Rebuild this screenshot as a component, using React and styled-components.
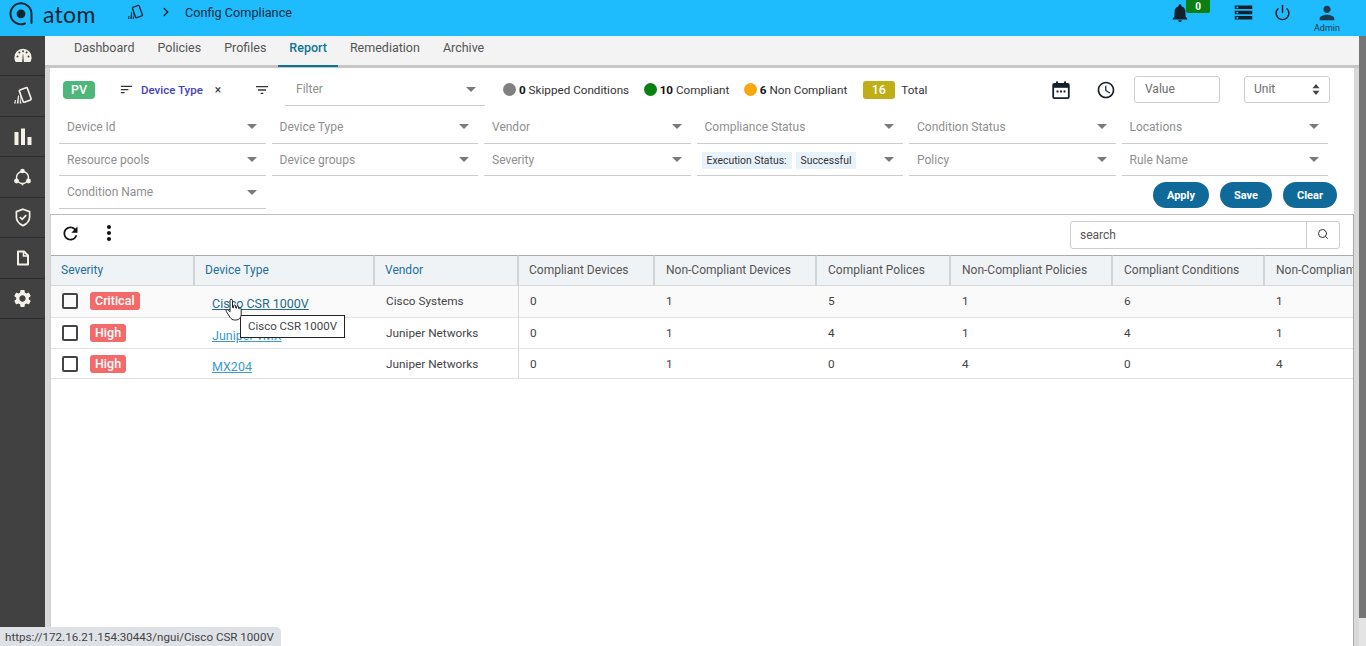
import styled, { createGlobalStyle } from "styled-components";
import { FiChevronRight, FiPower, FiSearch } from "react-icons/fi";
import {
  MdNotifications,
  MdStorage,
  MdPerson,
  MdSort,
  MdFilterList,
  MdAccessTime,
  MdSettings,
  MdRefresh,
  MdMoreVert,
} from "react-icons/md";

const GlobalStyle = createGlobalStyle`
  html, body {
    margin: 0;
    padding: 0;
    height: 100%;
    overflow: hidden;
    background: #fff;
    font-family: Roboto, "Liberation Sans", sans-serif;
  }
`;

const Page = styled.div`
  position: relative;
  width: 1366px;
  height: 646px;
  display: flex;
  flex-direction: column;
  overflow: hidden;
`;

const TopBar = styled.header`
  height: 36px;
  flex-shrink: 0;
  background: #1ebbfd;
  display: flex;
  align-items: center;
  color: #12263a;
`;

const Brand = styled.div`
  display: flex;
  align-items: center;
  gap: 9px;
  padding-left: 8px;
  width: 127px;
  box-sizing: border-box;
  margin-top: -9px;
`;

const BrandName = styled.span`
  font-family: Lato, "Noto Sans", sans-serif;
  font-size: 23px;
  letter-spacing: 0.3px;
  line-height: 26px;
  color: #142532;
`;

const Crumb = styled.div`
  display: flex;
  align-items: center;
  font-size: 12.7px;
  color: #1b2d3d;
  margin-top: -12px;
  svg:nth-child(2) {
    margin: 0 12px 0 15px;
  }
`;

const TopIcons = styled.div`
  margin-left: auto;
  align-self: stretch;
  display: flex;
  align-items: flex-start;
  padding-right: 26px;
`;

const BellWrap = styled.div`
  position: relative;
  width: 22px;
  height: 36px;
  display: flex;
  justify-content: center;
  padding-top: 1px;
  box-sizing: border-box;
  margin-right: 42px;
  font-size: 24px;
  color: #12202c;
`;

const BellBadge = styled.span`
  position: absolute;
  left: 17px;
  top: 0;
  width: 24px;
  height: 13px;
  background: #0a8012;
  color: #fff;
  font-size: 10px;
  font-weight: 700;
  text-align: center;
  line-height: 13px;
  border-radius: 0 0 2px 2px;
`;

const TopIcon = styled.span`
  display: flex;
  font-size: ${(p) => p.$size}px;
  color: #12202c;
  margin-top: ${(p) => p.$top}px;
  margin-right: ${(p) => p.$gap}px;
`;

const UserBlock = styled.div`
  display: flex;
  flex-direction: column;
  align-items: center;
  font-size: 9px;
  line-height: 8px;
  color: #1c3a50;
  padding-top: 2px;
`;

const Body = styled.div`
  flex: 1;
  display: flex;
  min-height: 0;
`;

const SideNav = styled.nav`
  width: 45px;
  flex-shrink: 0;
  background: #414141;
  display: flex;
  flex-direction: column;
`;

const SideItem = styled.div`
  height: 39.45px;
  display: flex;
  align-items: center;
  justify-content: center;
  color: #f4f1e8;
  border-bottom: 1px solid #2e2e2e;
  font-size: 21px;
`;

const Main = styled.main`
  flex: 1;
  min-width: 0;
  display: flex;
  flex-direction: column;
  background: #d9d9d9;
  position: relative;
`;

const TabBar = styled.div`
  height: 29px;
  flex-shrink: 0;
  background: #f3f3f3;
  border-bottom: 3px solid #c6c6c6;
  margin-right: 7px;
  display: flex;
  padding-left: 29px;
  gap: 23px;
`;

const Tab = styled.div`
  font-size: 12.5px;
  line-height: 23px;
  color: ${(p) => (p.$active ? "#0e7396" : "#555")};
  font-weight: ${(p) => (p.$active ? 500 : 400)};
  position: relative;
  ${(p) =>
    p.$active &&
    `
    &::after {
      content: "";
      position: absolute;
      left: -11px;
      right: -11px;
      bottom: -2px;
      height: 2px;
      background: #0e7396;
    }
  `}
`;

const ScrollThumb = styled.div`
  position: absolute;
  top: 0;
  right: 0;
  bottom: 0;
  width: 7px;
  background: #e4e4e4;
  &::before {
    content: "";
    display: block;
    height: 582px;
    background: #757575;
  }
`;

const FilterPanel = styled.section`
  margin: 0 12px 0 5px;
  height: 147px;
  flex-shrink: 0;
  background: #fff;
  border-bottom: 1px solid #bdbdbd;
  box-sizing: border-box;
  padding: 1px 0 0 13px;
`;

const SummaryRow = styled.div`
  height: 41px;
  display: flex;
  align-items: center;
  font-size: 11.7px;
  color: #333;
`;

const PvTag = styled.span`
  width: 32px;
  height: 18px;
  background: #4cb778;
  border-radius: 4px;
  color: #fff;
  font-size: 12.5px;
  font-weight: 500;
  text-align: center;
  line-height: 18px;
  margin-right: 24px;
`;

const GroupChip = styled.span`
  display: flex;
  align-items: center;
  color: #4541b8;
  font-size: 11.5px;
  font-weight: 500;
  width: 105px;
  gap: 7px;
`;

const ChipClose = styled.span`
  margin-left: 5px;
  color: #333;
  font-weight: 400;
  font-size: 12px;
`;

const FilterIcon = styled.span`
  display: flex;
  font-size: 16px;
  color: #333;
  width: 34px;
  margin-left: 30px;
  box-sizing: border-box;
`;

const FilterSelect = styled.div`
  width: 200px;
  height: 32px;
  border-bottom: 1px solid #ccc;
  display: flex;
  align-items: center;
  justify-content: space-between;
  box-sizing: border-box;
  padding: 0 9px 0 11px;
  margin-left: -3px;
  color: #8f8f8f;
  font-size: 12px;
`;

const Caret = styled.i`
  width: 0;
  height: 0;
  border-left: 5px solid transparent;
  border-right: 5px solid transparent;
  border-top: 5px solid #7a7a7a;
`;

const Stat = styled.span`
  display: flex;
  align-items: center;
  gap: 3px;
  color: #333;
  margin-left: ${(p) => p.$left || 14.5}px;
  b {
    color: #111;
    font-weight: 700;
  }
`;

const Dot = styled.i`
  width: 13px;
  height: 13px;
  border-radius: 50%;
  background: ${(p) => p.$color};
`;

const TotalTag = styled.span`
  width: 32px;
  height: 18px;
  background: #bfae16;
  border-radius: 3px;
  color: #fff;
  font-size: 12.5px;
  font-weight: 500;
  text-align: center;
  line-height: 18px;
  margin: 0 6.5px 0 15.5px;
`;

const SummaryRight = styled.div`
  margin-left: auto;
  display: flex;
  align-items: center;
  padding-right: 24px;
`;

const RightIcon = styled.span`
  display: flex;
  font-size: 20px;
  color: #16202a;
  margin-right: ${(p) => p.$gap}px;
`;

const ValueBox = styled.div`
  width: 86px;
  height: 27px;
  border: 1px solid #ccc;
  border-radius: 3px;
  box-sizing: border-box;
  font-size: 12px;
  color: #6d6d6d;
  line-height: 25px;
  padding-left: 10px;
  margin-right: 24px;
`;

const UnitBox = styled(ValueBox)`
  margin-right: 0;
  display: flex;
  align-items: center;
  justify-content: space-between;
  padding: 0 9px;
`;

const UpDown = styled.svg`
  width: 8px;
  height: 11px;
`;

const FieldGrid = styled.div`
  display: flex;
  flex-wrap: wrap;
  width: 1290px;
  column-gap: 6px;
  margin: 1px 0 0 -4px;
`;

const Field = styled.div`
  width: 206.5px;
  height: 32.7px;
  box-sizing: border-box;
  border-bottom: 1px solid #ccc;
  display: flex;
  align-items: center;
  justify-content: space-between;
  padding: 0 9px 0 8px;
  color: #8f8f8f;
  font-size: 12px;
`;

const TagGroup = styled.span`
  display: flex;
  gap: 4px;
  margin: 1px 0 0 -3px;
`;

const Tag = styled.span`
  background: #e8f2fb;
  color: #333;
  font-size: 10.4px;
  padding: 0 5px;
  line-height: 17px;
`;

const LastRow = styled.div`
  display: flex;
  justify-content: space-between;
  padding-right: 17px;
  margin-left: -4px;
`;

const ButtonRow = styled.div`
  display: flex;
  gap: 11px;
  margin-top: 6px;
  height: 26px;
`;

const ActionButton = styled.button`
  width: ${(p) => p.$w}px;
  height: 26px;
  border: 0;
  border-radius: 13px;
  background: #0f6a9a;
  color: #fff;
  font-family: inherit;
  font-size: 11px;
  font-weight: 700;
  padding: 0;
`;

const TableArea = styled.section`
  flex: 1;
  min-height: 0;
  margin: 0 12px 0 5px;
  background: #fff;
  border-left: 1px solid #cfcfcf;
  border-right: 1px solid #aaa;
  display: flex;
  flex-direction: column;
  overflow: hidden;
`;

const Toolbar = styled.div`
  height: 40px;
  flex-shrink: 0;
  display: flex;
  align-items: center;
  padding: 0 13px 0 9px;
  color: #111;
`;

const ToolIcon = styled.span`
  display: flex;
  font-size: ${(p) => p.$size}px;
  margin: -4px ${(p) => p.$gap}px 0 0;
`;

const SearchBox = styled.div`
  margin-left: auto;
  width: 270px;
  height: 28px;
  border: 1px solid #ccc;
  border-radius: 3px;
  box-sizing: border-box;
  display: flex;
  font-size: 12px;
  color: #555;
`;

const SearchText = styled.span`
  flex: 1;
  padding-left: 9px;
  line-height: 26px;
`;

const SearchBtn = styled.span`
  width: 33px;
  border-left: 1px solid #ccc;
  display: flex;
  align-items: center;
  justify-content: center;
  font-size: 12px;
  color: #333;
  padding-bottom: 3px;
  box-sizing: border-box;
`;

const Grid = styled.div`
  display: grid;
  grid-template-columns: 144px 180px 144px 136px 162px 134px 162px 152px 110px;
  flex-shrink: 0;
`;

const HeadCell = styled.div`
  height: 31px;
  box-sizing: border-box;
  background: #f0f3f6;
  border-top: 1px solid #a8acb0;
  border-bottom: 1px solid #d5d8da;
  border-right: 2px solid #cfd4d8;
  font-size: 12px;
  line-height: 28px;
  padding-left: ${(p) => p.$pad}px;
  color: ${(p) => (p.$link ? "#22709c" : "#555")};
  white-space: nowrap;
  overflow: hidden;
`;

const Cell = styled.div`
  height: ${(p) => p.$h}px;
  box-sizing: border-box;
  background: ${(p) => (p.$hover ? "#fafafa" : "#fff")};
  border-bottom: 1px solid #e2e2e2;
  border-right: ${(p) => (p.$divide ? "1px solid #dadada" : "0")};
  font-size: 11.8px;
  color: #444;
  display: flex;
  align-items: center;
  padding-left: ${(p) => p.$pad || 11}px;
  padding-bottom: ${(p) => (p.$hover ? 2 : 0)}px;
  white-space: nowrap;
`;

const Check = styled.i`
  width: 12px;
  height: 12px;
  border: 2px solid #444;
  border-radius: 2px;
  margin: 0 12px 0 0;
`;

const Severity = styled.span`
  background: #f26a6a;
  color: #fff;
  font-size: 12.5px;
  font-weight: 500;
  border-radius: 3px;
  padding: 0 5px;
  line-height: 18px;
`;

const DeviceLink = styled.a`
  color: ${(p) => (p.$hover ? "#1f6a8c" : "#3c9bcb")};
  text-decoration: underline;
  font-size: 12.5px;
  margin-top: 5px;
`;

const Tooltip = styled.div`
  position: absolute;
  left: 240px;
  top: 315px;
  height: 23px;
  width: 105px;
  box-sizing: border-box;
  background: #fff;
  border: 1px solid #222;
  font-size: 11.5px;
  color: #444;
  line-height: 21px;
  text-align: center;
  z-index: 3;
`;

const Cursor = styled.svg`
  position: absolute;
  left: 225px;
  top: 298px;
  width: 18px;
  height: 24px;
  z-index: 4;
`;

const StatusBar = styled.div`
  position: absolute;
  left: 0;
  bottom: 0;
  height: 19px;
  width: 281px;
  background: #dee1e6;
  border-top-right-radius: 5px;
  font-size: 11.6px;
  color: #444;
  line-height: 20px;
  padding-left: 5px;
  box-sizing: border-box;
  white-space: nowrap;
  z-index: 5;
`;

const tabs = ["Dashboard", "Policies", "Profiles", "Report", "Remediation", "Archive"];

const fields = [
  "Device Id",
  "Device Type",
  "Vendor",
  "Compliance Status",
  "Condition Status",
  "Locations",
  "Resource pools",
  "Device groups",
  "Severity",
  "Execution",
  "Policy",
  "Rule Name",
];

const columns = [
  ["Severity", true, 10],
  ["Device Type", true, 10],
  ["Vendor", true, 10],
  ["Compliant Devices", false, 10],
  ["Non-Compliant Devices", false, 11],
  ["Compliant Polices", false, 11],
  ["Non-Compliant Policies", false, 11],
  ["Compliant Conditions", false, 11],
  ["Non-Compliant Conditions", false, 11],
];

const rows = [
  { sev: "Critical", device: "Cisco CSR 1000V", vendor: "Cisco Systems", nums: [0, 1, 5, 1, 6, 1], h: 32, hover: true },
  { sev: "High", device: "Juniper vMX", vendor: "Juniper Networks", nums: [0, 1, 4, 1, 4, 1], h: 31 },
  { sev: "High", device: "MX204", vendor: "Juniper Networks", nums: [0, 1, 0, 4, 0, 4], h: 30 },
];

function DevicesIcon({ size = 20 }) {
  return (
    <svg width={size} height={size} viewBox="0 0 20 20" fill="none" stroke="currentColor">
      <rect x="8" y="2.5" width="8.5" height="13" rx="1" strokeWidth="1.6" transform="rotate(-20 12 9)" />
      <path d="M1 17.500h1.600l.3-3.500H2ZM3.800 17.500h1.700l.6-8H5ZM6.800 17.500h1.700L7.500 13.500 7.800 6H7.200Z" fill="currentColor" stroke="none" />
    </svg>
  );
}

function AtomLogo() {
  return (
    <svg width="26" height="26" viewBox="0 0 26 26" fill="none">
      <path d="M17 22.500A10.500 10.500 0 1 1 23.500 12.800V22" stroke="#142532" strokeWidth="2" strokeLinecap="round" />
      <circle cx="13" cy="12.800" r="4.400" fill="#142532" />
    </svg>
  );
}

function GaugeIcon() {
  return (
    <svg width="18" height="15" viewBox="0 0 18 15" fill="currentColor">
      <path d="M9 .8a8.600 8.600 0 0 0-8.600 8.600c0 1.700.5 3.200 1.300 4.600h14.600c.8-1.400 1.300-2.900 1.300-4.600A8.600 8.600 0 0 0 9 .8Z" />
      <g fill="#414141">
        <circle cx="3.500" cy="8.600" r="1" />
        <circle cx="5.400" cy="4.600" r="1" />
        <circle cx="9" cy="3.200" r="1" />
        <circle cx="12.600" cy="4.600" r="1" />
        <circle cx="14.500" cy="8.600" r="1" />
        <path d="M8.200 14 8.800 6h.4l.6 8Z" />
      </g>
    </svg>
  );
}

function BarsIcon() {
  return (
    <svg width="18" height="17" viewBox="0 0 18 17" fill="currentColor">
      <rect x="0.500" y="4" width="4" height="13" />
      <rect x="7" y="0.500" width="4" height="16.500" />
      <rect x="13.500" y="9" width="4" height="8" />
    </svg>
  );
}

function ClusterIcon() {
  return (
    <svg width="17" height="18" viewBox="0 0 17 18" fill="none" stroke="currentColor" strokeWidth="1.4">
      <circle cx="8.500" cy="9.500" r="6" />
      <g fill="currentColor" stroke="none">
        <circle cx="8.500" cy="3" r="2.300" />
        <circle cx="2.500" cy="13" r="2.400" />
        <circle cx="14.500" cy="13" r="2.400" />
        <circle cx="8.500" cy="16.500" r="1" />
      </g>
    </svg>
  );
}

function ShieldIcon() {
  return (
    <svg width="16" height="19" viewBox="0 0 16 19" fill="none" stroke="currentColor" strokeWidth="1.7">
      <path d="M8 1.200 14.600 3.600V9c0 4-2.800 6.900-6.600 8.600C4.200 15.900 1.400 13 1.400 9V3.600Z" />
      <path d="m4.800 9 2.400 2.400 4-4.200" />
    </svg>
  );
}

function FileIcon() {
  return (
    <svg width="14" height="16" viewBox="0 0 14 16" fill="none" stroke="currentColor" strokeWidth="2">
      <path d="M2 1.500h6l4 4v9H2Z" strokeLinejoin="round" />
      <path d="M7.500 1.500v4.500H12" strokeWidth="1.600" />
    </svg>
  );
}

function CalendarIcon() {
  return (
    <svg width="20" height="20" viewBox="0 0 20 20" fill="none">
      <rect x="2.200" y="3.800" width="15.600" height="14.400" rx="1.200" stroke="#16202a" strokeWidth="1.800" />
      <rect x="2.200" y="3.800" width="15.600" height="4" fill="#16202a" />
      <rect x="5" y="1.500" width="2" height="3" fill="#16202a" />
      <rect x="13" y="1.500" width="2" height="3" fill="#16202a" />
      <g fill="#16202a">
        <rect x="5.500" y="10.500" width="2" height="2" />
        <rect x="9" y="10.500" width="2" height="2" />
        <rect x="12.500" y="10.500" width="2" height="2" />
      </g>
    </svg>
  );
}

function HandCursor() {
  return (
    <Cursor viewBox="0 0 18 24">
      <path
        d="M5 2.500c0-1.600 2.500-1.600 2.500 0v7l1 .2V8c0-1.300 2.200-1.300 2.200 0v2l.8.2V9c0-1.200 2.100-1.200 2.100 0v1.500l.7.2c0-1 1.900-1 1.900.3v5.500c0 3-2 5.500-5 5.500H9.500c-2 0-3.300-1-4.300-2.500L1.300 13.500c-.8-1.300.8-2.500 1.900-1.500L5 13.800Z"
        fill="#fff"
        stroke="#222"
        strokeWidth="1"
      />
    </Cursor>
  );
}

function RowCells({ row }) {
  const { h, hover } = row;
  return (
    <>
      <Cell $h={h} $hover={hover}>
        <Check />
        <Severity>{row.sev}</Severity>
      </Cell>
      <Cell $h={h} $hover={hover} $pad={17}>
        <DeviceLink $hover={hover}>{row.device}</DeviceLink>
      </Cell>
      <Cell $h={h} $hover={hover} $divide>{row.vendor}</Cell>
      {row.nums.map((n, i) => (
        <Cell key={i} $h={h} $hover={hover}>{n}</Cell>
      ))}
    </>
  );
}

export default function App() {
  return (
    <Page>
      <GlobalStyle />
      <TopBar>
        <Brand>
          <AtomLogo />
          <BrandName>atom</BrandName>
        </Brand>
        <Crumb>
          <DevicesIcon size={17} />
          <FiChevronRight size={14} strokeWidth={2.5} />
          <span>Config Compliance</span>
        </Crumb>
        <TopIcons>
          <BellWrap>
            <MdNotifications />
            <BellBadge>0</BellBadge>
          </BellWrap>
          <TopIcon $size={21} $top={2} $gap={20}>
            <MdStorage />
          </TopIcon>
          <TopIcon $size={17} $top={4} $gap={23}>
            <FiPower />
          </TopIcon>
          <UserBlock>
            <MdPerson size={22} />
            Admin
          </UserBlock>
        </TopIcons>
      </TopBar>
      <Body>
        <SideNav>
          <SideItem><GaugeIcon /></SideItem>
          <SideItem><DevicesIcon /></SideItem>
          <SideItem><BarsIcon /></SideItem>
          <SideItem><ClusterIcon /></SideItem>
          <SideItem><ShieldIcon /></SideItem>
          <SideItem><FileIcon /></SideItem>
          <SideItem><MdSettings /></SideItem>
        </SideNav>
        <Main>
          <ScrollThumb />
          <TabBar>
            {tabs.map((t) => (
              <Tab key={t} $active={t === "Report"}>{t}</Tab>
            ))}
          </TabBar>
          <FilterPanel>
            <SummaryRow>
              <PvTag>PV</PvTag>
              <GroupChip>
                <MdSort size={15} color="#333" />
                Device Type
                <ChipClose>×</ChipClose>
              </GroupChip>
              <FilterIcon><MdFilterList /></FilterIcon>
              <FilterSelect>
                <span>Filter</span>
                <Caret />
              </FilterSelect>
              <Stat $left={18}><Dot $color="#808080" /><span><b>0</b> Skipped Conditions</span></Stat>
              <Stat><Dot $color="#0a8012" /><span><b>10</b> Compliant</span></Stat>
              <Stat><Dot $color="#f9a70e" /><span><b>6</b> Non Compliant</span></Stat>
              <TotalTag>16</TotalTag>
              <span>Total</span>
              <SummaryRight>
                <RightIcon $gap={25}><CalendarIcon /></RightIcon>
                <RightIcon $gap={18}><MdAccessTime /></RightIcon>
                <ValueBox>Value</ValueBox>
                <UnitBox>
                  Unit
                  <UpDown viewBox="0 0 8 11">
                    <path d="M4 0 7.500 4.200H.5ZM4 11 .5 6.800H7.500Z" fill="#444" />
                  </UpDown>
                </UnitBox>
              </SummaryRight>
            </SummaryRow>
            <FieldGrid>
              {fields.map((f) => (
                <Field key={f}>
                  {f === "Execution" ? (
                    <TagGroup>
                      <Tag>Execution Status:</Tag>
                      <Tag>Successful</Tag>
                    </TagGroup>
                  ) : (
                    <span>{f}</span>
                  )}
                  <Caret />
                </Field>
              ))}
            </FieldGrid>
            <LastRow>
              <Field>
                <span>Condition Name</span>
                <Caret />
              </Field>
              <ButtonRow>
                <ActionButton $w={56}>Apply</ActionButton>
                <ActionButton $w={52}>Save</ActionButton>
                <ActionButton $w={54}>Clear</ActionButton>
              </ButtonRow>
            </LastRow>
          </FilterPanel>
          <TableArea>
            <Toolbar>
              <ToolIcon $size={21} $gap={16}><MdRefresh /></ToolIcon>
              <ToolIcon $size={24} $gap={0}><MdMoreVert /></ToolIcon>
              <SearchBox>
                <SearchText>search</SearchText>
                <SearchBtn><FiSearch /></SearchBtn>
              </SearchBox>
            </Toolbar>
            <Grid>
              {columns.map(([c, link, pad]) => (
                <HeadCell key={c} $link={link} $pad={pad}>{c}</HeadCell>
              ))}
              {rows.map((r) => (
                <RowCells key={r.device} row={r} />
              ))}
            </Grid>
          </TableArea>
        </Main>
      </Body>
      <Tooltip>Cisco CSR 1000V</Tooltip>
      <HandCursor />
      <StatusBar>https://172.16.21.154:30443/ngui/Cisco CSR 1000V</StatusBar>
    </Page>
  );
}
